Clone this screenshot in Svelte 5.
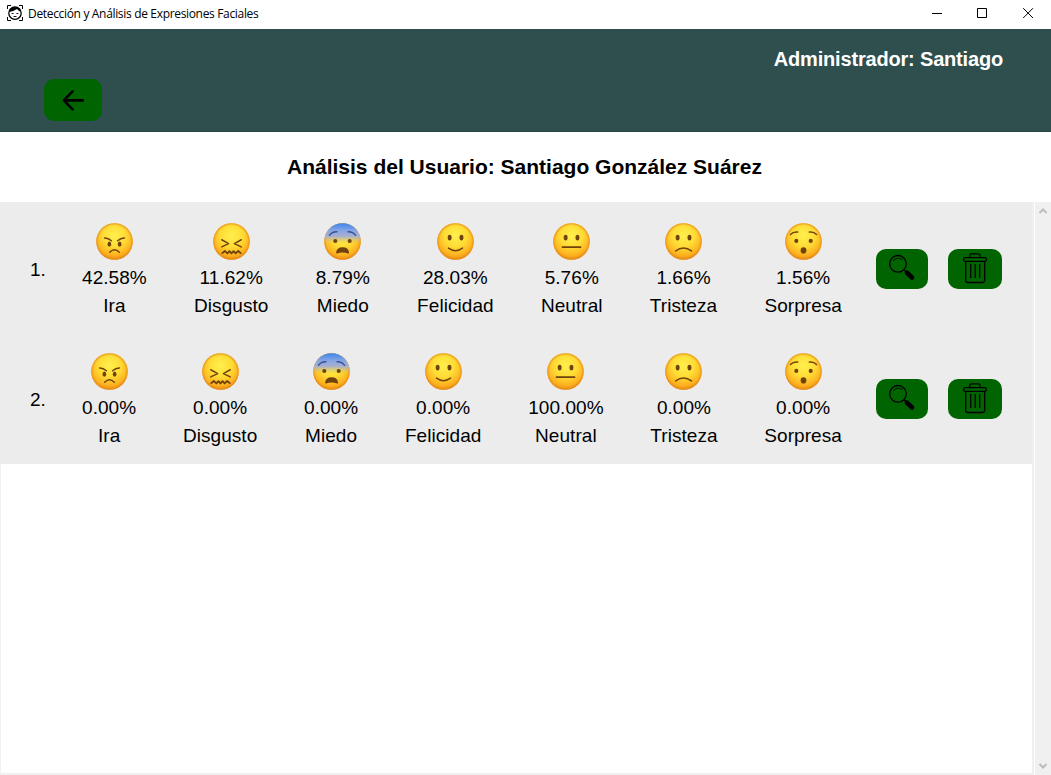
<script>
  const labels = ['Ira', 'Disgusto', 'Miedo', 'Felicidad', 'Neutral', 'Tristeza', 'Sorpresa'];
  const rows = [
    ['42.58%', '11.62%', '8.79%', '28.03%', '5.76%', '1.66%', '1.56%'],
    ['0.00%', '0.00%', '0.00%', '0.00%', '100.00%', '0.00%', '0.00%']
  ];
</script>

<svelte:head><title>Detección y Análisis de Expresiones Faciales</title></svelte:head>

{#snippet face(kind)}
  <svg class="face" viewBox="0 0 36 36">
    <defs>
      <radialGradient id="skin" cx=".5" cy=".34" r=".68">
        <stop offset="0" stop-color="#fff04e" />
        <stop offset=".45" stop-color="#ffdc35" />
        <stop offset=".8" stop-color="#fcb01e" />
        <stop offset="1" stop-color="#e88411" />
      </radialGradient>
      <radialGradient id="rim">
        <stop offset=".86" stop-color="#e28a1c" stop-opacity="0" />
        <stop offset="1" stop-color="#e28a1c" stop-opacity=".75" />
      </radialGradient>
      <linearGradient id="cold" x1="0" y1="0" x2="0" y2="1">
        <stop offset="0" stop-color="#3b86ec" />
        <stop offset=".2" stop-color="#86a4e4" />
        <stop offset=".36" stop-color="#a9b0cf" />
        <stop offset=".56" stop-color="#d9c46c" stop-opacity="0" />
      </linearGradient>
    </defs>
    <circle cx="18" cy="18" r="17.8" fill="url(#skin)" />
    <circle cx="18" cy="18" r="17.8" fill="url(#rim)" />
    {#if kind === 'Miedo'}<circle cx="18" cy="18" r="17.8" fill="url(#cold)" />{/if}
    <g class="ink">
      {#if kind === 'Ira'}
        <path d="M8.3 14.6Q12 14.5 15 17.3M27.7 14.6Q24 14.5 21 17.3M13.3 28.4Q18 23.6 22.7 28.4" />
        <ellipse cx="13" cy="20.6" rx="1.8" ry="2.6" /><ellipse cx="23" cy="20.6" rx="1.8" ry="2.6" />
      {:else if kind === 'Disgusto'}
        <path d="M8.5 16.3L15.2 20L8.5 23.3M27.5 16.3L20.8 20L27.5 23.3" />
        <path class="heavy" d="M9 29.3L11.5 27.2L14 29.6L16 27.4L18 29.6L20 27.4L22 29.6L24.5 27.2L27 29.3" />
      {:else if kind === 'Miedo'}
        <path class="brow" d="M5.3 12Q8 8.3 12.5 8.5M30.7 12Q28 8.3 23.5 8.5" />
        <circle cx="11" cy="17.5" r="2" /><circle cx="25" cy="17.5" r="2" />
        <path class="mouth" d="M12.5 29C13 22.7 23 22.7 23.7 29Q18 27 12.5 29Z" />
      {:else if kind === 'Sorpresa'}
        <path d="M5.3 11.2Q8 8.3 12.3 8.8M30.7 11.2Q28 8.3 23.7 8.8" />
        <circle cx="11" cy="17.4" r="2" /><circle cx="25" cy="17.4" r="2" />
        <ellipse cx="18" cy="26.7" rx="2.8" ry="3" />
      {:else}
        <ellipse cx="12.3" cy="14.2" rx="1.9" ry="2.8" /><ellipse cx="23.8" cy="14.2" rx="1.9" ry="2.8" />
        {#if kind === 'Felicidad'}<path d="M11.2 24.4Q18 29.4 24.8 24.4" />
        {:else if kind === 'Neutral'}<path class="heavy" d="M9.3 23.5H26.7" />
        {:else}<path d="M10.3 27.2Q18 21.5 25.8 27.2" />{/if}
      {/if}
    </g>
  </svg>
{/snippet}

<div class="window">
  <div class="titlebar">
    <svg class="logo" viewBox="0 0 16 16" fill="none" stroke="#000">
      <path d="M.5 4V.5H4M12 .5H15.5V4M15.5 12V15.5H12M4 15.5H.5V12" />
      <circle cx="8" cy="8.2" r="6.2" stroke-width="1.3" />
      <path d="M2 7C2 1 14 1 14 7Q11.5 6 10 3.9Q6.5 6.2 2 7Z" fill="#000" stroke="none" />
      <path d="M4.6 8.5h2M9.4 8.5h2M6.5 11.5h3" stroke-width=".9" />
    </svg>
    <span class="caption">Detección y Análisis de Expresiones Faciales</span>
    <svg class="controls" width="105" height="28" viewBox="0 0 105 28" fill="none" stroke="#000">
      <path d="M0 13.5h10M45.5 8.5h9v9h-9zM91.2 8.2l9.8 9.8M101 8.2l-9.8 9.8" />
    </svg>
  </div>

  <header>
    <div class="admin"><span>Administrador: Santiago</span></div>
    <button class="back" aria-label="Volver">
      <svg width="58" height="42" viewBox="0 0 58 42"><path d="M38.8 21.4H20M28.6 12.4L19.8 21.4L28.6 30.4" fill="none" stroke="#000" stroke-width="2.6" stroke-linecap="round" stroke-linejoin="round" /></svg>
    </button>
  </header>

  <h1><span>Análisis del Usuario: Santiago González Suárez</span></h1>

  <div class="body">
    <div class="pane">
      <div class="list">
        {#each rows as row, r}
          <div class="row">
            <span class="num">{r + 1}.</span>
            <div class="cells">
              {#each row as value, i}
                <div class="cell">
                  {@render face(labels[i])}
                  <span>{value}</span>
                  <span>{labels[i]}</span>
                </div>
              {/each}
            </div>
            <button class="view" aria-label="Ver">
              <svg width="52" height="40" viewBox="0 0 52 40" fill="none" stroke="#000">
                <circle cx="22" cy="14.8" r="8.3" stroke-width="1.3" />
                <path d="M17 12Q21 7.2 26.3 10.7" stroke-width=".8" />
                <path d="M28 20.8l3 3" stroke-width="1.5" />
                <path d="M31 23.8l5 4.7" stroke-width="4.6" stroke-linecap="round" />
              </svg>
            </button>
            <button class="delete" aria-label="Eliminar">
              <svg width="54" height="40" viewBox="0 0 54 40" fill="none" stroke="#000" stroke-width="1.3">
                <rect x="15.5" y="8.7" width="23" height="3.6" rx="1.8" />
                <path d="M21.8 8.5V6.5Q21.8 4.9 23.4 4.9H30.4Q32 4.9 32 6.5V8.5M17.7 12.5V31Q17.7 33.5 20.2 33.5H34.2Q36.7 33.5 36.7 31V12.5M22.7 15V29M27.2 15V29M31.7 15V29" />
              </svg>
            </button>
          </div>
        {/each}
      </div>
    </div>
    <div class="scroll">
      <svg width="10" height="8" viewBox="0 0 10 8"><path d="M1.5 6L5 2.5L8.5 6" /></svg>
      <svg width="10" height="8" viewBox="0 0 10 8"><path d="M1.5 2L5 5.5L8.5 2" /></svg>
    </div>
  </div>
</div>

<style>
  :global(body) { margin: 0; background: #fff; overflow: hidden; }
  .window { width: 1051px; height: 775px; display: flex; flex-direction: column; font-family: "Liberation Sans", Arial, sans-serif; color: #000; }
  .titlebar { height: 29px; flex: none; display: flex; align-items: flex-start; padding-left: 7px; }
  .logo { width: 16px; height: 16px; margin-top: 5px; }
  .caption { font: 12px/28px "Open Sans", "Noto Sans", sans-serif; margin-left: 5px; letter-spacing: -.33px; white-space: nowrap; }
  .controls { margin-left: auto; margin-right: 14px; }
  header { height: 103px; flex: none; box-sizing: border-box; background: #2f4f4f; border-bottom: 1px solid #2a4747; padding: 18px 48px 0 44px; }
  .admin { height: 32px; color: #fff; font-weight: bold; font-size: 20px; line-height: 24px; text-align: right; letter-spacing: -.18px; }
  button { border: 0; padding: 0; border-radius: 10px; background: #006400; flex: none; height: 40px; }
  button svg { display: block; }
  .back { display: block; width: 58px; height: 42px; }
  h1 { margin: 0; height: 70px; flex: none; font-size: 21px; line-height: 70px; text-align: center; padding-right: 2px; white-space: nowrap; }
  .body { flex: 1; min-height: 0; display: flex; }
  .pane { width: 1034px; box-sizing: border-box; border: solid #f0f0f0; border-width: 1px 2px 2px 1px; margin-right: 1px; }
  .list { background: #ececec; margin: -1px 0 0 -1px; padding: 1px 0; }
  .row { height: 130px; display: flex; align-items: center; font-size: 19px; }
  .num { width: 52px; padding-left: 30px; line-height: 28px; margin-top: 4px; }
  .cells { width: 760px; display: flex; justify-content: space-between; letter-spacing: .06px; }
  .cell { display: flex; flex-direction: column; align-items: center; line-height: 28px; padding-top: 6px; }
  .face { width: 37px; height: 37px; display: block; margin-bottom: 4px; }
  .ink { fill: #70420e; }
  .ink path { fill: none; stroke: #70420e; stroke-width: 1.4; stroke-linecap: round; stroke-linejoin: round; }
  .ink .mouth { fill: #70420e; }
  .ink .brow { stroke: #355291; }
  .ink .heavy { stroke-width: 1.8; }
  .view { width: 52px; margin: 1px 20px 0 34px; }
  .delete { width: 54px; margin-top: 1px; }
  .scroll { flex: 1; background: #f0f0f0; display: flex; flex-direction: column; justify-content: space-between; align-items: center; padding: 5px 0; }
  .scroll path { fill: none; stroke: #bcbcbc; stroke-width: 2; }
</style>
